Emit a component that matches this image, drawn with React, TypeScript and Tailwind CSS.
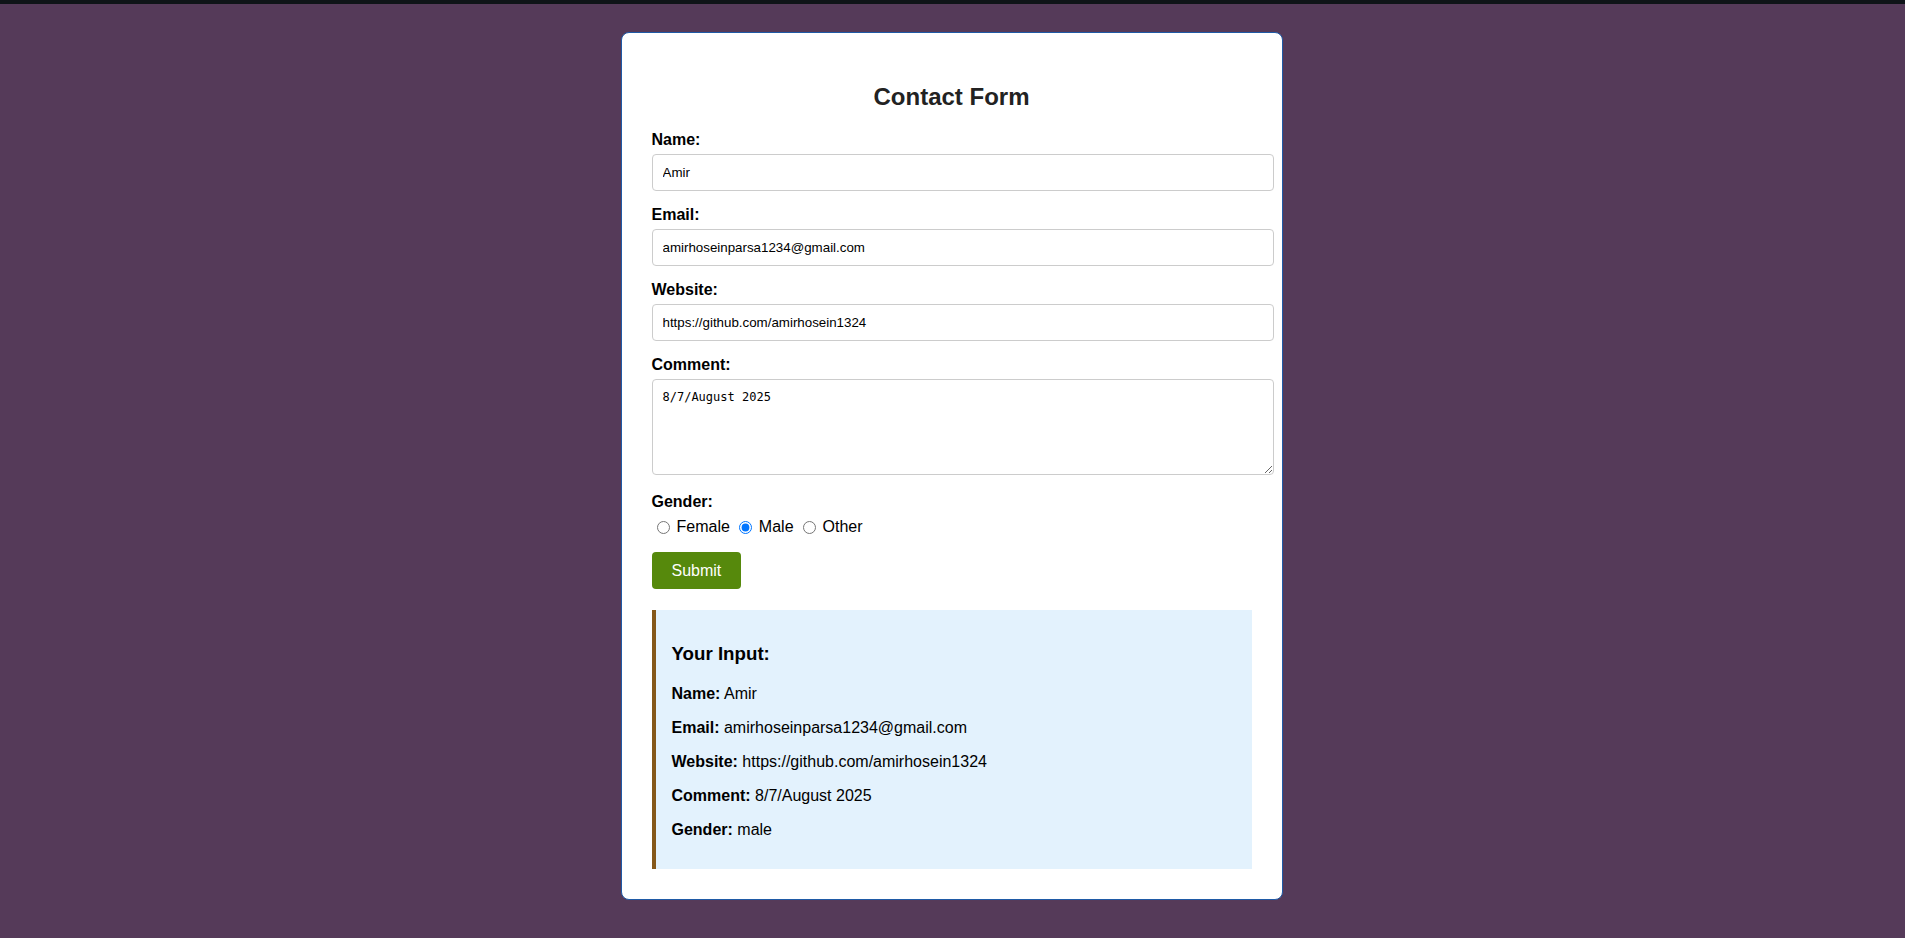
import React from 'react';

const fields = [
  { id: 'name', label: 'Name:', type: 'text', value: 'Amir' },
  { id: 'email', label: 'Email:', type: 'email', value: 'amirhoseinparsa1234@gmail.com' },
  { id: 'website', label: 'Website:', type: 'text', value: 'https://github.com/amirhosein1324' },
];

const summary = [
  { label: 'Name:', value: 'Amir' },
  { label: 'Email:', value: 'amirhoseinparsa1234@gmail.com' },
  { label: 'Website:', value: 'https://github.com/amirhosein1324' },
  { label: 'Comment:', value: '8/7/August 2025' },
  { label: 'Gender:', value: 'male' },
];

const App: React.FC = () => {
  const [gender, setGender] = React.useState('male');

  return (
    <div className="min-h-screen bg-[#553a59] font-['Liberation_Sans',Arial,sans-serif] text-black">
      <div className="h-[4px] bg-[#0f1418]" />
      <div className="ml-[calc(50%-332px)] mt-[28px] w-[662px] rounded-[8px] border border-[#1f5aa6] bg-white p-[30px]">
        <h2 className="my-[20px] text-center text-[24px] font-bold leading-[28px] text-[#222]">Contact Form</h2>

        {fields.map(f => (
          <div key={f.id}>
            <label htmlFor={f.id} className="mb-[5px] block text-[16px] font-bold leading-[18px]">{f.label}</label>
            <input
              id={f.id}
              type={f.type}
              defaultValue={f.value}
              className="mb-[15px] box-content block h-[15px] w-[600px] rounded-[4px] border border-[#ccc] bg-white p-[10px] text-[13.33px] leading-[15px] text-black outline-none"
            />
          </div>
        ))}

        <label htmlFor="comment" className="mb-[5px] block text-[16px] font-bold leading-[18px]">Comment:</label>
        <textarea
          id="comment"
          defaultValue="8/7/August 2025"
          className="mb-[18px] box-content block h-[74px] w-[600px] rounded-[4px] border border-[#ccc] bg-white p-[10px] font-['DejaVu_Sans_Mono',monospace] text-[12px] leading-[15px] text-black outline-none"
        />

        <label className="mb-[7px] block text-[16px] font-bold leading-[18px]">Gender:</label>
        <div className="mb-[16px] flex items-center text-[16px] leading-[18px]">
          {['female', 'male', 'other'].map(g => (
            <React.Fragment key={g}>
              <input
                type="radio"
                name="gender"
                checked={gender === g}
                onChange={() => setGender(g)}
                className="ml-[5px] mr-[3px] h-[13px] w-[13px]"
              />
              <span className="ml-[4px] mr-[4px]">{g === 'female' ? 'Female' : g === 'male' ? 'Male' : 'Other'}</span>
            </React.Fragment>
          ))}
        </div>

        <button className="block h-[37px] rounded-[4px] bg-[#56890c] px-[20px] text-[16px] leading-[18px] text-white">Submit</button>

        <div className="mt-[21px] border-l-[4px] border-[#85581a] bg-[#e3f2fd] px-[16px] pt-[15px] pb-[14px]">
          <h3 className="mt-[18px] mb-[20px] text-[18.72px] font-bold leading-[22px]">Your Input:</h3>
          {summary.map(s => (
            <p key={s.label} className="my-[16px] text-[16px] leading-[18px]">
              <strong>{s.label}</strong> {s.value}
            </p>
          ))}
        </div>
      </div>
    </div>
  );
};

export default App;
